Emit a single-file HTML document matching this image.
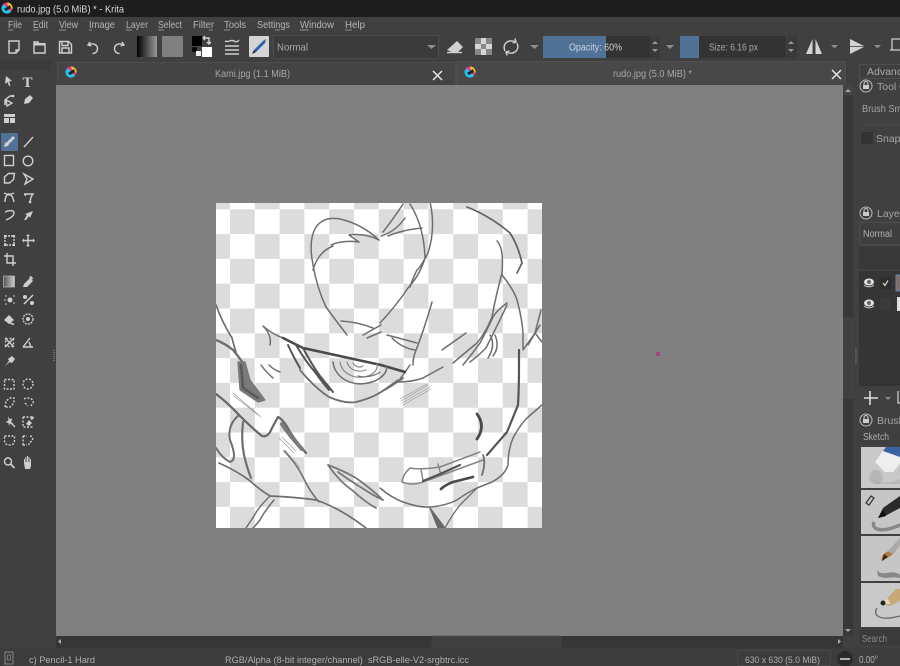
<!DOCTYPE html>
<html><head><meta charset="utf-8"><title>rudo.jpg (5.0 MiB) * - Krita</title>
<style>
html,body{margin:0;padding:0;background:#404040;width:900px;height:666px;overflow:hidden}
svg{display:block;position:absolute;left:0;top:0;filter:blur(.3px)}
text{font-family:"Liberation Sans",sans-serif;font-size:10.5px;fill:#b4b4b4}
.i{fill:none;stroke:#cfcfcf;stroke-width:1.4}
.f{fill:#cfcfcf;stroke:none}
</style></head><body>
<svg width="900" height="666" viewBox="0 0 900 666" xmlns="http://www.w3.org/2000/svg">
<defs>
<pattern id="chk" x="205.2" y="209.3" width="49.6" height="49.6" patternUnits="userSpaceOnUse">
<rect width="49.6" height="49.6" fill="#fff"/>
<rect x="24.8" width="24.8" height="24.8" fill="#dcdcdc"/>
<rect y="24.8" width="24.8" height="24.8" fill="#dcdcdc"/>
</pattern>
<filter id="b" x="-5%" y="-5%" width="110%" height="110%"><feGaussianBlur stdDeviation="0.35"/></filter>
<filter id="b2"><feGaussianBlur stdDeviation="0.3"/></filter>
<linearGradient id="grad" x1="0" x2="1"><stop offset="0" stop-color="#000"/><stop offset="1" stop-color="#999"/></linearGradient>
<linearGradient id="g2" x1="0" x2="1"><stop offset="0" stop-color="#555"/><stop offset="1" stop-color="#ccc"/></linearGradient>
<g id="logo"><circle r="5.5" fill="#e8338c"/><path d="M-5.500 0A5.500 5.500 0 0 0 4 3.800L-3-3.500Q-5.500-2-5.500 0Z" fill="#19c8e8"/><path d="M0-5.500A5.500 5.500 0 0 1 5.500 1L1-2Z" fill="#f0d020"/><path d="M-3 1L3-3 4 0-1 3Z" fill="#222"/></g>
</defs>

<rect width="900" height="666" fill="#404040"/>
<!-- title bar -->
<rect width="900" height="17" fill="#1d1d1d"/>
<use href="#logo" transform="translate(7,8)"/>
<text x="17" y="12.500" textLength="107" lengthAdjust="spacingAndGlyphs" style="fill:#d8d8d8">rudo.jpg (5.0 MiB) * - Krita</text>

<!-- menu -->
<g>
<text x="8" y="28" textLength="14" lengthAdjust="spacingAndGlyphs">File</text><text x="33" y="28" textLength="15" lengthAdjust="spacingAndGlyphs">Edit</text><text x="59" y="28" textLength="19" lengthAdjust="spacingAndGlyphs">View</text><text x="89" y="28" textLength="26" lengthAdjust="spacingAndGlyphs">Image</text><text x="126" y="28" textLength="22" lengthAdjust="spacingAndGlyphs">Layer</text><text x="158" y="28" textLength="24" lengthAdjust="spacingAndGlyphs">Select</text><text x="193" y="28" textLength="21" lengthAdjust="spacingAndGlyphs">Filter</text><text x="224" y="28" textLength="22" lengthAdjust="spacingAndGlyphs">Tools</text><text x="257" y="28" textLength="33" lengthAdjust="spacingAndGlyphs">Settings</text><text x="300" y="28" textLength="34" lengthAdjust="spacingAndGlyphs">Window</text><text x="345" y="28" textLength="20" lengthAdjust="spacingAndGlyphs">Help</text>
</g>
<g stroke="#aaa" stroke-width=".8"><path d="M8 30h5M33 30h6M59 30h7M89 30h3M126 30h6M158 30h6M209 30h4M224 30h6M275 30h5M300 30h9M345 30h7"/></g>

<!-- toolbar icons -->
<path class="i" d="M9 41h10v9l-3 3H9zM19 50h-3v3"/>
<path class="i" d="M34 42h4l1 2h6v9H34z"/><rect x="34" y="43" width="11" height="2.500" fill="#cfcfcf"/>
<path class="i" d="M59.500 41.500h9l3 3v8.500h-12zM62 41.500v4h6v-4M62 53v-5h7v5"/>
<path class="i" stroke-width="1.600" d="M90 42l-2 3 3.500 1M88.500 45c4-2.500 9-.5 9 3.500 0 3-2 5-5 5"/>
<path class="i" stroke-width="1.600" d="M122 42l2 3-3.500 1M123.500 45c-4-2.500-9-.5-9 3.500 0 3 2 5 5 5"/>
<rect x="137" y="36" width="20" height="21" fill="url(#grad)"/>
<rect x="162" y="36" width="21" height="21" rx="1" fill="#808080"/>
<rect x="192" y="36" width="10" height="10" fill="#000"/><rect x="202" y="47" width="10" height="10" fill="#fff"/>
<rect x="192" y="47" width="5" height="5" fill="#000" stroke="#666" stroke-width=".3"/><rect x="196" y="51" width="5" height="5" fill="#eee"/>
<path class="i" stroke-width="1" d="M204 38h5v6M207 42l2 2 2-2M203 38l2-2M203 38l2 2"/>
<path class="i" stroke-width="1.500" d="M225 41c3 2 6-2 9 0s4 0 5-1M225 46h14M225 50h14M225 54h14"/>
<rect x="249" y="36" width="20" height="21" rx="1" fill="#d4d4d4"/>
<path d="M254 50l9-9 3-2-1 4-9 9z" fill="#2c5fb0"/><path d="M252 54l2-4 2 2z" fill="#222"/>

<rect x="273.500" y="35.500" width="165" height="23" rx="1" fill="#3b3b3b" stroke="#4d4d4d"/>
<text x="277" y="50.500" textLength="31" lengthAdjust="spacingAndGlyphs" style="fill:#a8a8a8">Normal</text>
<path d="M427 45h9l-4.500 4z" fill="#8d8d8d"/>

<path class="f" d="M447 50l10-9 6 6-5 5h-6z"/><path d="M447 52.500h15" stroke="#cfcfcf" stroke-width="1.400"/>
<g><rect x="475" y="38" width="17" height="17" fill="#d6d6d6"/><rect x="475" y="38" width="6" height="6" fill="#888"/><rect x="486" y="38" width="6" height="6" fill="#888"/><rect x="481" y="44" width="5" height="5" fill="#888"/><rect x="475" y="49" width="6" height="6" fill="#888"/><rect x="486" y="49" width="6" height="6" fill="#888"/></g>
<path class="i" stroke-width="1.600" d="M505 51c-3-7 3-12 10-9.500M515 38.500l1 3.500-3.500 1M517 43c3 7-3 12-10 9.500M507 55.500l-1-3.500 3.500-1"/>
<path d="M530 45h9l-4.500 4z" fill="#8d8d8d"/>

<!-- opacity -->
<rect x="543" y="36" width="107" height="22" fill="#333"/>
<rect x="543" y="36" width="63" height="22" fill="#4f7296"/>
<text x="569" y="50.500" textLength="53" lengthAdjust="spacingAndGlyphs" style="fill:#cdd4da">Opacity: 60%</text>
<rect x="650" y="35" width="10" height="23" fill="#3a3a3a"/>
<path d="M652 44l3-3 3 3zM652 49l3 3 3-3z" fill="#999"/>
<path d="M666 45h8l-4 4z" fill="#8d8d8d"/>
<!-- size -->
<rect x="680" y="36" width="106" height="22" fill="#333"/>
<rect x="680" y="36" width="19" height="22" fill="#4f7296"/>
<text x="709" y="50.500" textLength="49" lengthAdjust="spacingAndGlyphs" style="fill:#a8a8a8">Size: 6.16 px</text>
<rect x="787" y="35" width="10" height="23" fill="#3a3a3a"/>
<path d="M788 44l3-3 3 3zM788 49l3 3 3-3z" fill="#999"/>
<path d="M806 54l6.500-15v15zM822 54l-6.500-15v15z" fill="#d4d4d4"/>
<path d="M831 45h7l-3.500 3.500z" fill="#8d8d8d"/>
<path d="M850 39l15 7.500-15 7.500z" fill="#d4d4d4"/><path d="M850 46.500h15" stroke="#404040" stroke-width=".8"/>
<path d="M874 45h7l-3.500 3.500z" fill="#8d8d8d"/>
<path d="M890 50h10M892 50V39h8" fill="none" stroke="#ccc" stroke-width="1.300"/>

<!-- separator/handles -->
<rect x="0" y="60" width="51" height="11" fill="#3b3b3b"/>
<!-- tabs -->
<rect x="57.500" y="62.500" width="398" height="23" fill="#444" stroke="#4e4e4e"/>
<rect x="456.500" y="61.500" width="389" height="24" fill="#484848" stroke="#4e4e4e"/>
<use href="#logo" transform="translate(71,72)"/>
<use href="#logo" transform="translate(470,72)"/>
<text x="215" y="77" textLength="75" lengthAdjust="spacingAndGlyphs" style="fill:#a8a8a8">Kami.jpg (1.1 MiB)</text>
<text x="613" y="77" textLength="79" lengthAdjust="spacingAndGlyphs" style="fill:#a8a8a8">rudo.jpg (5.0 MiB) *</text>
<path d="M433 71l9 9M442 71l-9 9M832 70l9 9M841 70l-9 9" stroke="#e4e4e4" stroke-width="1.500" fill="none"/>

<!-- canvas -->
<rect x="56" y="85" width="787" height="551" fill="#808080"/>
<rect x="216" y="203" width="326" height="325" fill="url(#chk)"/>

<!-- sketch -->
<svg x="216" y="203" width="326" height="325" viewBox="216 203 326 325" style="filter:none">
<g fill="none" stroke="#6e6e6e" stroke-width="1.200" stroke-linecap="round" stroke-linejoin="round" filter="url(#b)">
<g stroke-width="1.500">
<path d="M347 335Q337 322 326 307Q317 288 313 265Q308 240 316 227Q324 216 340 219Q362 224 379 240"/>
<path d="M313 270Q318 252 333 246M331 245Q342 240 359 242L349 235Q365 233 379 240"/>
<path d="M383 232Q394 218 403 204M381 236Q395 232 405 218M388 236Q402 230 422 228M410 204Q424 226 425 258Q420 275 408 288Q396 306 380 323"/>
<path d="M430 202Q436 228 428 253Q420 268 417 270Q412 280 410 287"/>
<path d="M341 321Q358 322 373 328M363 335L381 325M367 338L381 332"/>
<path d="M432 302Q424 330 415 353Q413 358 413 365M387 335L417 343M392 338Q402 348 415 350"/>
<path d="M467 207Q490 216 510 233Q518 245 522 263L517 273" stroke-width="1.700" stroke="#5e5e5e"/>
<path d="M497 241Q504 248 502 273Q496 295 492 317Q486 332 477 343Q466 352 453 363"/>
<path d="M502 275Q514 290 517 300Q522 318 523 333L523 350L535 333L542 342M535 333L541 310"/>
<path d="M507 303Q497 310 493 317Q486 332 480 343Q472 354 463 365M507 305Q500 320 486 348Q478 356 470 362"/>
<path d="M490 335Q496 345 488 358M495 335Q500 347 493 356"/>
<path d="M216 305Q222 322 232 338Q234 346 236 352" stroke-width="1.700"/>
<path d="M263 326Q272 335 270 345M263 326Q272 334 283 338"/>
<path d="M261 365Q266 372 273 378M269 365Q274 370 280 372"/>
<path d="M239 415Q227 425 230 440Q238 460 230 462Q222 458 216 448" stroke-width="2"/>
<path d="M243 422Q241 440 244 455Q247 468 251 478" stroke-width="2.200"/>
<path d="M219 463Q235 470 249 480Q260 490 270 496Q295 497 316 500Q340 508 366 528" stroke-width="1.700"/>
<path d="M269 497Q258 508 254 516Q250 522 246 528M274 500Q264 512 260 520Q256 525 253 528" stroke-width="1.500"/>
<path d="M284 451Q296 463 303 477Q310 492 319 502"/>
<path d="M328 465Q342 470 356 478Q370 488 381 498M328 465Q340 482 352 490Q365 502 376 508M338 472Q352 482 362 488Q374 496 383 500" stroke="#777" stroke-width="1.800"/>
<path d="M380 488Q392 498 403 502Q420 508 430 507Q445 506 457 500Q468 492 477 488L492 482Q505 475 508 465Q508 450 513 438Q520 425 527 418L542 405" stroke-width="1.500"/>
<path d="M445 528Q452 515 460 505L477 488" stroke-width="1.300"/>
<path d="M480 452L440 467Q420 470 410 468Q403 474 402 482Q412 486 423 482L483 460" stroke-width="1.500" stroke="#858585"/>
<path d="M421 469L423 481M438 464L441 475" stroke="#888"/>
<path d="M398 382L410 365M398 382Q412 382 423 378Q434 372 443 367"/>
<path d="M300 370Q315 388 329 397Q345 404 356 402Q372 398 381 392Q392 386 403 378" stroke-width="1.800"/>
<path d="M442 350L466 333" stroke-width="1.500"/>
<path d="M528 345L540 325"/>
</g>
<!-- thick darks -->
<path d="M216 394Q228 403 239 415Q252 428 262 436Q268 438 272 428L278 417Q284 420 290 432Q298 444 306 453" stroke-width="2.200" stroke="#666"/>
<path d="M282 424Q290 436 302 449" stroke-width="4" stroke="#7a7a7a"/>
<path d="M216 340Q226 344 233 350Q240 358 246 368" stroke-width="2.400"/>
<path d="M283 338L303 348Q340 356 381 365L405 372" stroke-width="2.600" stroke="#484848"/>
<path d="M296 345Q306 362 315 372Q322 382 329 390M303 348Q312 365 320 376L333 392M288 345Q294 358 300 368" stroke-width="2" stroke="#555"/>
<path d="M381 392L398 380" stroke-width="1.600"/>
<path d="M519 350L519 365Q519 388 518 405Q512 420 507 432L487 455" stroke-width="2.200" stroke="#555" stroke-dasharray="5 1"/>
<path d="M483 455Q486 462 482 475" stroke-width="1.800"/>
<path d="M477 414Q486 426 477 439" stroke-width="2.800" stroke="#4a4a4a"/>
<path d="M441 489Q445 485 453 482L473 477" stroke-width="2.700" stroke="#4a4a4a"/>
<path d="M423 481L440 474L460 465" stroke-width="2.200" stroke="#555"/>
<path d="M430 508L438 528 445 528z" fill="#666" stroke="#666"/>
<path d="M238 362L240 390 258 402 265 400 250 380 245 362z" fill="#7a7a7a" stroke="#777"/>
<path d="M241 365L243 388 258 398" stroke="#5a5a5a" stroke-width="2.500"/>
<!-- iris -->
<path d="M333 362C335 378 352 388 372 382 384 378 388 370 386 366" stroke-width="1.500"/>
<path d="M340 362C342 374 355 380 368 376 376 373 378 368 377 364" stroke="#888"/>
<path d="M347 362C349 370 358 373 366 370" stroke="#888"/>
<path d="M353 363C355 367 360 368 363 366" stroke="#888"/>
<path d="M358 376C365 378 375 376 380 372" stroke="#777"/>
<!-- hatching -->
<g stroke="#999" stroke-width=".7">
<path d="M430 387L402 403M428 385L401 401M431 389L403 405M427 384L400 399"/>
<path d="M233 393L261 417M234 396L258 415"/>
<path d="M279 438L294 453M282 437L296 451M285 450L300 468"/>
</g>
</g>
</svg>

<!-- cursor dot -->
<circle cx="658" cy="354" r="1.500" fill="none" stroke="#c0207a" stroke-width="1"/>

<!-- canvas scrollbars -->
<rect x="843" y="85" width="10" height="551" fill="#383838"/>
<rect x="843" y="85" width="10" height="10" fill="#444"/>
<path d="M845 92l3-3 3 3z" fill="#aaa"/>
<rect x="843.500" y="318" width="9" height="80" fill="#404040" stroke="#4a4a4a" stroke-width=".6"/>
<path d="M856 348v16" stroke="#777" stroke-width="1.500" stroke-dasharray="1 1"/>
<path d="M845 629l3 3 3-3z" fill="#aaa"/>
<rect x="56" y="636" width="787" height="12" fill="#363636"/>
<rect x="432" y="636" width="129" height="12" fill="#3f3f3f" stroke="#484848" stroke-width=".6"/>
<path d="M61 639v5l-3-2.500zM838 639v5l3-2.500z" fill="#aaa"/>
<path d="M54 350v12" stroke="#777" stroke-width="1.500" stroke-dasharray="1 1"/>

<!-- toolbox -->
<rect x="1" y="133" width="17" height="18" rx="1" fill="#4f7296"/>
<g filter="url(#b2)">
<path class="f" d="M6 76l6 5-3 .5 1.500 4-1.500.5-1.500-4L5 84z"/>
<text x="22.500" y="87" style="font-family:'Liberation Serif',serif;font-size:15px;font-weight:bold;fill:#cfcfcf">T</text>
<path class="i" d="M5 105v-5l5-4h3M6 100l6 3-5 3z"/><circle cx="13" cy="96" r="1.300" fill="#cfcfcf"/>
<path class="f" d="M24 104l1-5 5-4 3 3-4 5z"/>
<rect x="4" y="114" width="11" height="3" fill="#cfcfcf"/><rect x="4" y="118" width="5" height="5" fill="#cfcfcf"/><rect x="10" y="118" width="5" height="5" fill="#cfcfcf"/>
<path class="f" d="M4 147l1-4 2-1 6-6 2 2-6 6-1 2z"/>
<path class="i" d="M24 147l9-10"/>
<rect x="4.500" y="155.500" width="9" height="10" class="i"/>
<circle cx="28" cy="161" r="4.800" class="i"/>
<path class="i" d="M4.500 183v-6l4-3.500h6l-1 6-4 3.500z"/>
<path class="i" d="M24 174l9 5-8 5 2-5z"/>
<path class="i" d="M5 202c0-5 2-8 4-8s4 3 5 8M4 193l5 2 5-2"/>
<path class="i" d="M24 194h9l-2 3-1 5M26 194l-1 2"/><circle cx="30" cy="202" r="1.300" fill="#cfcfcf"/>
<path class="i" d="M5 212c4-2 9-2 9 1s-3 5-8 7"/>
<path class="f" d="M33 211l-8 3 2 1-3 5 2 0 3-4 1 2z"/>
<rect x="5" y="236" width="9" height="9" class="i" stroke-dasharray="2 1"/><path d="M4 235h2v2H4zM13 235h2v2h-2zM4 244h2v2H4zM13 244h2v2h-2z" fill="#cfcfcf"/>
<path class="i" d="M28 235v11M23 240.500h11"/><path class="f" d="M28 234l2 2h-4zM28 247l2-2h-4zM22 240.500l2-2v4zM35 240.500l-2-2v4z"/>
<path class="i" stroke-width="1.600" d="M7 253v10h9M4 256h9v10"/>
<rect x="3.500" y="276" width="11" height="11" fill="url(#g2)" stroke="#bbb" stroke-width=".7"/>
<path class="f" d="M23 287l1-3 6-6 3 3-6 6z"/><path class="f" d="M29 277l2-1 2 2-1 2z"/>
<g fill="#cfcfcf"><circle cx="10" cy="300" r="2.500"/><circle cx="6" cy="296" r=".8"/><circle cx="14" cy="296" r=".8"/><circle cx="5" cy="300" r=".8"/><circle cx="6" cy="304" r=".8"/><circle cx="14" cy="303" r=".8"/>
<circle cx="25" cy="297" r="2"/><circle cx="32" cy="303" r="2"/><path d="M24 304l9-9" stroke="#cfcfcf" stroke-width="1.500"/></g>
<path class="f" d="M4 320l5-5 5 5-5 4z"/><path d="M10 323l4 1.500" stroke="#cfcfcf" stroke-width="1.500"/>
<circle cx="28" cy="319" r="5" class="i" stroke-dasharray="2 1"/><circle cx="28" cy="319" r="2" fill="#cfcfcf"/>
<path class="i" d="M5 338l9 9M14 338l-9 9"/><rect x="5.500" y="338.500" width="8" height="8" class="i" stroke-dasharray="2 2"/>
<path class="i" d="M23 347h10M23 347l7-9M29 342l2 5"/>
<path class="f" d="M5 366l4-5-1-2 4-3 3 3-3 4-2-1z"/>
<rect x="4.500" y="379.500" width="9.500" height="9.500" class="i" stroke-dasharray="2 1.500"/>
<circle cx="28" cy="384" r="5" class="i" stroke-dasharray="2 1.500"/>
<path class="i" stroke-dasharray="2 1.500" d="M5 407l1-6 4-3 4 0 0 5-4 4z"/>
<path class="i" stroke-dasharray="2 1.500" d="M24 399c3-2 8-1 9 2s-2 3-2 6M25 403l3 3"/>
<path class="f" d="M8 416l1.500 3 3-.5-1.500 3 2.500 2.500-3.500-.5L9 426l-.5-3-3-1 3-1.500z"/><path d="M11 423l4 4" stroke="#cfcfcf" stroke-width="1.300"/>
<path class="i" stroke-dasharray="2 1.500" d="M23 417h10M23 417v10h10"/><path class="f" d="M26 424l3-4 3 3-3 3zM30 419l3-3 1 2-2 2z"/>
<path class="i" stroke-dasharray="2 1.500" d="M4.500 436h10v4c0 4-2 5-5 5s-5-1-5-5z"/>
<path class="i" stroke-dasharray="2 1.500" d="M23 436h4M23 436v9M23 445h4M30 436c3 0 3 3 2 5l-3 2v2"/>
<circle cx="8" cy="461.500" r="3.500" class="i"/><path d="M10.500 464l4 4" stroke="#cfcfcf" stroke-width="1.800"/>
<path class="f" d="M24 463v-4h1v3h.5v-5h1v5h.5v-6h1v6h.5v-5h1v5h.5v-3h1v7l-1 3h-5z"/>
</g>

<!-- right dock -->
<rect x="857" y="62" width="43" height="586" fill="#404040"/>
<rect x="859.500" y="64.500" width="45" height="14" fill="#3f3f3f" stroke="#4e4e4e"/>
<text x="867" y="75" style="fill:#aaa">Advance</text>
<circle cx="866" cy="86" r="6" fill="none" stroke="#bbb"/><rect x="863" y="85" width="6" height="4" fill="#ccc"/><path d="M864 85v-1.500a2 2 0 0 1 4 0V85" fill="none" stroke="#ccc"/>
<text x="877" y="90" style="fill:#a4a4a4">Tool O</text>
<text x="862" y="112" textLength="40" lengthAdjust="spacingAndGlyphs" style="fill:#a4a4a4">Brush Sm</text>
<path d="M860 125h40" stroke="#4a4a4a"/>
<rect x="861" y="132" width="12" height="12" fill="#333"/>
<text x="876" y="142" style="fill:#a4a4a4">Snap t</text>
<circle cx="866" cy="213" r="6" fill="none" stroke="#bbb"/><rect x="863" y="212" width="6" height="4" fill="#ccc"/><path d="M864 212v-1.500a2 2 0 0 1 4 0V212" fill="none" stroke="#ccc"/>
<text x="877" y="217" style="fill:#a4a4a4">Layers</text>
<rect x="859.500" y="222.500" width="45" height="22" fill="#3f3f3f" stroke="#4e4e4e"/>
<text x="863" y="237" textLength="29" lengthAdjust="spacingAndGlyphs" style="fill:#b0b0b0">Normal</text>
<rect x="859" y="247" width="41" height="22" fill="#383838"/>
<rect x="859" y="271" width="41" height="115" fill="#353535"/>
<ellipse cx="869" cy="282" rx="5" ry="3.500" fill="#e0e0e0"/><circle cx="869" cy="282" r="2" fill="#666"/><path d="M864 285c3 2.500 7 2.500 10 0" stroke="#ccc" fill="none"/>
<ellipse cx="869" cy="303" rx="5" ry="3.500" fill="#e0e0e0"/><circle cx="869" cy="303" r="2" fill="#666"/><path d="M864 306c3 2.500 7 2.500 10 0" stroke="#ccc" fill="none"/>
<rect x="880" y="277" width="11" height="12" rx="1" fill="#2e2e2e"/>
<path d="M883 283l2 2.500 3-5" stroke="#ddd" fill="none" stroke-width="1.200"/>
<rect x="880" y="298" width="11" height="12" rx="1" fill="#3a3a3a"/>
<rect x="896" y="275" width="4" height="16" fill="#8a6a60" stroke="#5f88b0"/>
<rect x="897" y="297" width="3" height="14" fill="#ddd"/>
<path d="M870 391v14M864 398h14" stroke="#ddd" stroke-width="1.600"/>
<path d="M885 397h6l-3 3z" fill="#888"/>
<path d="M898 391v12h2" stroke="#ccc" fill="none" stroke-width="1.300"/>
<circle cx="866" cy="420" r="6" fill="none" stroke="#bbb"/><rect x="863" y="419" width="6" height="4" fill="#ccc"/><path d="M864 419v-1.500a2 2 0 0 1 4 0V419" fill="none" stroke="#ccc"/>
<text x="877" y="424" style="fill:#a4a4a4">Brush</text>
<rect x="859.500" y="429.500" width="45" height="15" fill="#3f3f3f"/>
<text x="863" y="440" textLength="26" lengthAdjust="spacingAndGlyphs" style="fill:#b0b0b0">Sketch</text>

<!-- brush presets -->
<rect x="861" y="447" width="39" height="41" fill="#c9c9c9"/>
<rect x="861" y="490" width="39" height="44" fill="#c6c6c6"/>
<rect x="861" y="536" width="39" height="45" fill="#c6c6c6"/>
<rect x="861" y="583" width="39" height="44" fill="#c9c9c9"/>
<g filter="url(#b2)">
<path d="M875 462l10-14 15 8v8l-7 8h-8z" fill="#eee"/><path d="M883 451l3-4h14v10z" fill="#3a62a0"/>
<circle cx="876" cy="477" r="7" fill="#aaa" fill-opacity=".6"/><path d="M870 477c6 6 20 8 30 2v5h-24z" fill="#aaa" fill-opacity=".5"/>
<path d="M878 518l5-10 17-12v12l-15 8z" fill="#2a2a2a"/><path d="M878 518l5-8 3 6z" fill="#111"/>
<path d="M874 522c-3 8 8 11 26 3" fill="none" stroke="#888" stroke-width="3.500"/>
<path d="M866 503l5-7 3 2-5 7z" fill="none" stroke="#333" stroke-width="1.200"/>
<path d="M882 561c-2-4 3-10 8-10l10-12v6l-8 10z" fill="#b37a3c"/><path d="M888 551l12-13v7l-8 9z" fill="#aaa"/><path d="M882 561l2-7 4 3z" fill="#3a2616"/>
<path d="M877 570c6 8 15-2 23 5v3c-10-2-14 2-22-2z" fill="#888"/>
<path d="M882 604l14-15h4v12l-10 5z" fill="#c9a878"/><path d="M882 604l5-6 4 6z" fill="#e6d8bc"/><circle cx="883" cy="603" r="2.500" fill="#222"/>
<path d="M877 608c-4 6 0 14 23 8" fill="none" stroke="#666" stroke-width="1.300"/>
</g>
<rect x="859" y="630" width="41" height="15" fill="#3a3a3a"/>
<text x="862" y="642" textLength="25" lengthAdjust="spacingAndGlyphs" style="fill:#8c8c8c">Search</text>

<!-- status bar -->
<rect x="0" y="648" width="900" height="18" fill="#3c3c3c"/>
<rect x="5" y="652" width="8" height="12" fill="none" stroke="#999" stroke-width=".8"/><rect x="7.500" y="655" width="3" height="5" fill="none" stroke="#999" stroke-width=".6"/>
<text x="29" y="663" textLength="66" lengthAdjust="spacingAndGlyphs" style="font-size:9.500px;fill:#b0b0b0">c) Pencil-1 Hard</text>
<text x="225" y="663" textLength="244" lengthAdjust="spacingAndGlyphs" style="font-size:9.500px;fill:#b0b0b0" xml:space="preserve">RGB/Alpha (8-bit integer/channel)  sRGB-elle-V2-srgbtrc.icc</text>
<rect x="737.500" y="650.500" width="93" height="15" fill="none" stroke="#484848"/>
<text x="745" y="663" textLength="75" lengthAdjust="spacingAndGlyphs" style="font-size:9.500px;fill:#b0b0b0">630 x 630 (5.0 MiB)</text>
<circle cx="845" cy="659" r="8" fill="#2a2a2a"/><path d="M840 659h10" stroke="#ddd" stroke-width="1.500"/>
<text x="859" y="663" textLength="19" lengthAdjust="spacingAndGlyphs" style="font-size:10px;fill:#b0b0b0">0.00°</text>
</svg>
</body></html>
